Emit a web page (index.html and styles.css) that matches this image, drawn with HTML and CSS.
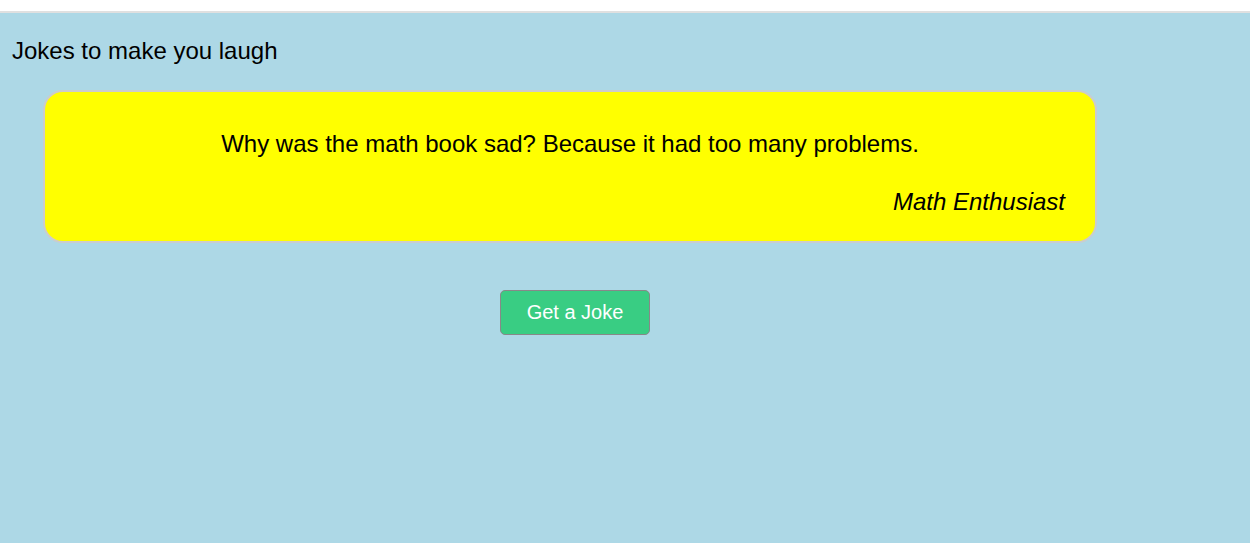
FILE: index.html
```html
<!DOCTYPE html>
<html>
<head>
<meta charset="utf-8">
<link rel="stylesheet" href="styles.css">
</head>
<body>
<div class="topbar"></div>
<main class="page">
  <h1 class="title">Jokes to make you laugh</h1>
  <section class="card">
    <p class="joke">Why was the math book sad? Because it had too many problems.</p>
    <p class="author">Math Enthusiast</p>
  </section>
  <div class="actions">
    <button class="btn">Get a Joke</button>
  </div>
</main>
</body>
</html>
```
FILE: styles.css
```css
html, body {
  margin: 0;
  padding: 0;
  height: 100%;
  background: #ffffff;
  font-family: "Liberation Sans", Arial, sans-serif;
}
body {
  display: flex;
  flex-direction: column;
}
.topbar {
  height: 11px;
  flex: none;
}
.page {
  flex: 1;
  background: #add8e6;
  border-top: 2px solid #e0e0e0;
  padding: 25px 0 0 0;
}
.title {
  margin: 0 0 0 12px;
  font-size: 24px;
  font-weight: normal;
  color: #000;
  line-height: 26px;
}
.card {
  margin: 26px 0 0 43px;
  width: 1054px;
  box-sizing: border-box;
  height: 153px;
  background: #ffff00;
  border: 2px solid #cccccc;
  border-radius: 20px;
  padding: 38px 30px 0 30px;
}
.joke {
  margin: 0;
  text-align: center;
  font-size: 24px;
  line-height: 28px;
  color: #000;
}
.author {
  margin: 30px 0 0 0;
  text-align: right;
  font-size: 24px;
  line-height: 28px;
  font-style: italic;
  color: #000;
}
.actions {
  margin: 47px 0 0 500px;
}
.btn {
  width: 150px;
  height: 45px;
  background: #39cd83;
  border: 1px solid #888888;
  border-radius: 5px;
  color: #ffffff;
  font-family: "Liberation Sans", Arial, sans-serif;
  font-size: 20px;
  padding: 0;
  cursor: pointer;
}
```
